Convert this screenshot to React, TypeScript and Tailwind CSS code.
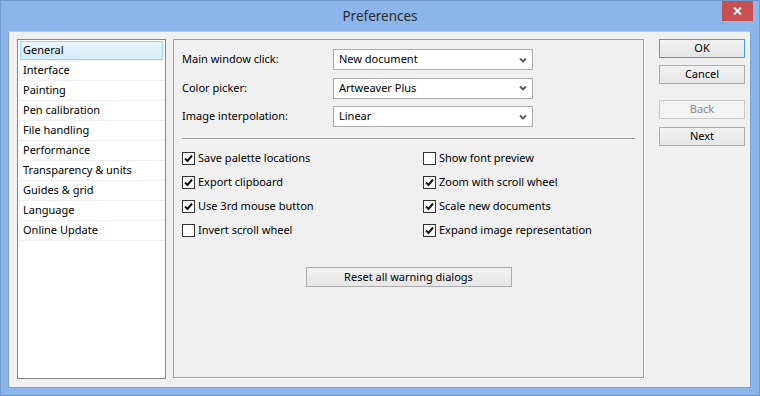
import React from "react";

const font = { fontFamily: '"Noto Sans", "Segoe UI", sans-serif' };

const pages = [
  "General",
  "Interface",
  "Painting",
  "Pen calibration",
  "File handling",
  "Performance",
  "Transparency & units",
  "Guides & grid",
  "Language",
  "Online Update",
];

const dropdowns = [
  { label: "Main window click:", value: "New document" },
  { label: "Color picker:", value: "Artweaver Plus" },
  { label: "Image interpolation:", value: "Linear" },
];

const options = [
  { label: "Save palette locations", checked: true },
  { label: "Show font preview", checked: false },
  { label: "Export clipboard", checked: true },
  { label: "Zoom with scroll wheel", checked: true },
  { label: "Use 3rd mouse button", checked: true },
  { label: "Scale new documents", checked: true },
  { label: "Invert scroll wheel", checked: false },
  { label: "Expand image representation", checked: true },
];

const Chevron = () => (
  <svg width="8" height="6" viewBox="0 0 8 6" className="shrink-0">
    <path d="M1 1.5 L4 4.5 L7 1.5" fill="none" stroke="#5a5a5a" strokeWidth="1.8" />
  </svg>
);

const CheckBox = ({ checked }: { checked: boolean }) => (
  <div className="w-[13px] h-[13px] border border-[#333] bg-white flex items-center justify-center shrink-0">
    {checked && (
      <svg width="11" height="11" viewBox="0 0 11 11">
        <path d="M2 5.5 L4.5 8 L9 2.5" fill="none" stroke="#111" strokeWidth="2" />
      </svg>
    )}
  </div>
);

const Button = ({
  children,
  primary,
  disabled,
}: {
  children: React.ReactNode;
  primary?: boolean;
  disabled?: boolean;
}) => (
  <div
    className={`w-[86px] h-[19px] flex items-center justify-center border ${
      primary
        ? "border-[#3c9ff0] bg-gradient-to-b from-[#f2f2f2] to-[#e6e6e6] text-black"
        : disabled
        ? "border-[#c9c9c9] bg-[#f4f4f4] text-[#8a8a8a]"
        : "border-[#acacac] bg-gradient-to-b from-[#f2f2f2] to-[#e6e6e6] text-black"
    }`}
  >
    {children}
  </div>
);

export default function App() {
  return (
    <div
      className="w-[760px] h-[396px] bg-[#8cb5ec] border border-[#7097cc] flex flex-col overflow-hidden"
      style={font}
    >
      {/* title bar */}
      <div className="h-[30px] relative flex items-center justify-center shrink-0">
        <span className="text-[13.5px] text-[#2b2b2b] mt-[1px]">Preferences</span>
        <div className="absolute right-[6px] top-0 w-[31px] h-[20px] bg-[#c75050] flex items-center justify-center">
          <svg width="9" height="8" viewBox="0 0 9 8">
            <path d="M1 0.5 L8 7.5 M8 0.5 L1 7.5" stroke="#fff" strokeWidth="1.8" />
          </svg>
        </div>
      </div>

      {/* client area */}
      <div className="flex-1 ml-[7px] mr-[8px] mb-[7px] bg-[#f0f0f0] border border-[#7e9fcc] border-t-[#a9c6ee] flex pt-[7px] pl-[8px] text-[11px] text-black">
        {/* page list */}
        <div className="w-[149px] h-[340px] border border-[#828790] bg-white p-[1px] shrink-0">
          {pages.map((p, i) => (
            <div key={p} className="h-[20px] border-b border-[#f0f0f0] relative">
              {i === 0 && (
                <div className="absolute left-[1px] right-[1px] top-0 bottom-0 border border-[#9fd5f7] bg-gradient-to-b from-[#eaf6fd] to-[#d4ecfa]" />
              )}
              <span className="relative block pl-[4px] leading-[18px]">{p}</span>
            </div>
          ))}
        </div>

        {/* settings panel */}
        <div className="ml-[7px] w-[471px] h-[339px] border border-[#a0a0a0] shadow-[1px_1px_0_#ffffff] shrink-0 pt-[9px] px-[8px]">
          <div className="flex flex-col gap-[7.5px]">
            {dropdowns.map((d) => (
              <div key={d.label} className="flex items-center h-[21px]">
                <span className="w-[151px]">{d.label}</span>
                <div className="w-[200px] h-[21px] bg-white border border-[#acacac] flex items-center justify-between pl-[5px] pr-[5px]">
                  <span>{d.value}</span>
                  <Chevron />
                </div>
              </div>
            ))}
          </div>

          <div className="mt-[11px] border-t border-[#a0a0a0] border-b border-b-white" />

          <div className="grid grid-cols-[241px_1fr] mt-[6px]">
            {options.map((o) => (
              <div key={o.label} className="h-[24px] flex items-center gap-[3px]">
                <CheckBox checked={o.checked} />
                <span>{o.label}</span>
              </div>
            ))}
          </div>

          <div className="flex justify-center mt-[25px]">
            <div className="w-[206px] h-[20px] border border-[#acacac] bg-gradient-to-b from-[#f2f2f2] to-[#e6e6e6] flex items-center justify-center">
              Reset all warning dialogs
            </div>
          </div>
        </div>

        {/* buttons */}
        <div className="ml-[15px] flex flex-col">
          <Button primary>OK</Button>
          <div className="mt-[7px]">
            <Button>Cancel</Button>
          </div>
          <div className="mt-[16px]">
            <Button disabled>Back</Button>
          </div>
          <div className="mt-[8px]">
            <Button>Next</Button>
          </div>
        </div>
      </div>
    </div>
  );
}
